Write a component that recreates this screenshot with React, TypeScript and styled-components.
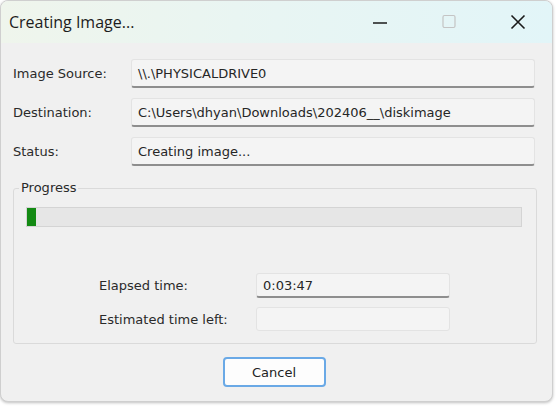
import React from 'react';
import styled, { createGlobalStyle } from 'styled-components';

const Global = createGlobalStyle`
  html, body { margin: 0; padding: 0; background: #ffffff; width: 556px; height: 406px; overflow: hidden; }
  body { font-family: "DejaVu Sans", Tahoma, sans-serif; }
  * { box-sizing: border-box; }
`;

const Window = styled.div`
  width: 553px;
  height: 402px;
  background: #f0f0f0;
  border: 1px solid #cfcfcf;
  border-radius: 8px;
  overflow: hidden;
  display: flex;
  flex-direction: column;
  box-shadow: 0 1px 3px rgba(0, 0, 0, 0.25);
`;

const TitleBar = styled.div`
  height: 42px;
  flex: none;
  display: flex;
  align-items: center;
  background: linear-gradient(90deg, #eff5ec 0%, #e8f5f3 50%, #e2f5f8 100%);
  padding-left: 8px;
`;

const Title = styled.div`
  flex: 1;
  font-family: "Open Sans", "Noto Sans", sans-serif;
  font-size: 16px;
  color: #1c1c1c;
`;

const CaptionButton = styled.div<{ $disabled?: boolean }>`
  width: 69px;
  height: 42px;
  display: flex;
  align-items: center;
  justify-content: center;
  color: ${(p) => (p.$disabled ? '#c4c4c4' : '#1a1a1a')};
`;

const Body = styled.div`
  flex: 1;
  display: flex;
  flex-direction: column;
  padding: 16px 17px 0 12px;
`;

const Form = styled.div`
  display: grid;
  grid-template-columns: 118px 1fr;
  row-gap: 10px;
  align-items: center;
`;

const Label = styled.div`
  font-size: 13px;
  color: #2a2a2a;
  white-space: nowrap;
`;

const Field = styled.div<{ $h?: number; $disabled?: boolean }>`
  height: ${(p) => p.$h ?? 29}px;
  display: flex;
  align-items: center;
  padding-left: 6px;
  font-size: 13px;
  color: #262626;
  background: #f4f4f4;
  border: 1px solid #e3e3e3;
  border-bottom: ${(p) => (p.$disabled ? '1px solid #e3e3e3' : '2px solid #8e8e8e')};
  border-radius: 3px;
  white-space: nowrap;
  overflow: hidden;
`;

const Group = styled.fieldset`
  margin: 14px -2px 0 0;
  padding: 0 14px 12px 12px;
  border: 1px solid #dadada;
  border-radius: 3px;
  min-width: 0;
`;

const Legend = styled.legend`
  margin-left: -7px;
  padding: 0 2px;
  font-size: 13px;
  line-height: 16px;
  color: #2a2a2a;
`;

const Bar = styled.div`
  margin-top: 11px;
  height: 20px;
  background: #e6e6e6;
  border: 1px solid #d4d4d4;
  display: flex;
`;

const Chunk = styled.div`
  height: 100%;
  background: #138a13;
`;

const TimeGrid = styled.div`
  margin: 46px 0 0 73px;
  display: grid;
  grid-template-columns: 157px 194px;
  row-gap: 9px;
  align-items: center;
`;

const Footer = styled.div`
  display: flex;
  justify-content: center;
  padding-top: 13px;
`;

const Button = styled.button`
  width: 103px;
  height: 30px;
  background: #fdfdfd;
  border: 2px solid #6aa9e6;
  border-radius: 4px;
  font-family: "DejaVu Sans", Tahoma, sans-serif;
  font-size: 13px;
  color: #222;
  padding: 0;
`;

export default function App() {
  return (
    <>
      <Global />
      <Window>
        <TitleBar>
          <Title>Creating Image...</Title>
          <CaptionButton>
            <svg width="16" height="16" viewBox="0 0 16 16">
              <path d="M1 9h14" stroke="currentColor" strokeWidth="1.6" />
            </svg>
          </CaptionButton>
          <CaptionButton $disabled>
            <svg width="16" height="16" viewBox="0 0 16 16">
              <rect x="2" y="1.5" width="12" height="12" rx="1.5" fill="none" stroke="currentColor" strokeWidth="1.2" />
            </svg>
          </CaptionButton>
          <CaptionButton>
            <svg width="16" height="16" viewBox="0 0 16 16">
              <path d="M1.5 1.5l13 13M14.5 1.5l-13 13" stroke="currentColor" strokeWidth="1.6" />
            </svg>
          </CaptionButton>
        </TitleBar>
        <Body>
          <Form>
            <Label>Image Source:</Label>
            <Field>\\.\PHYSICALDRIVE0</Field>
            <Label>Destination:</Label>
            <Field>C:\Users\dhyan\Downloads\202406__\diskimage</Field>
            <Label>Status:</Label>
            <Field>Creating image...</Field>
          </Form>
          <Group>
            <Legend>Progress</Legend>
            <Bar>
              <Chunk style={{ width: 9 }} />
            </Bar>
            <TimeGrid>
              <Label>Elapsed time:</Label>
              <Field $h={25}>0:03:47</Field>
              <Label>Estimated time left:</Label>
              <Field $h={24} $disabled />
            </TimeGrid>
          </Group>
          <Footer>
            <Button>Cancel</Button>
          </Footer>
        </Body>
      </Window>
    </>
  );
}
